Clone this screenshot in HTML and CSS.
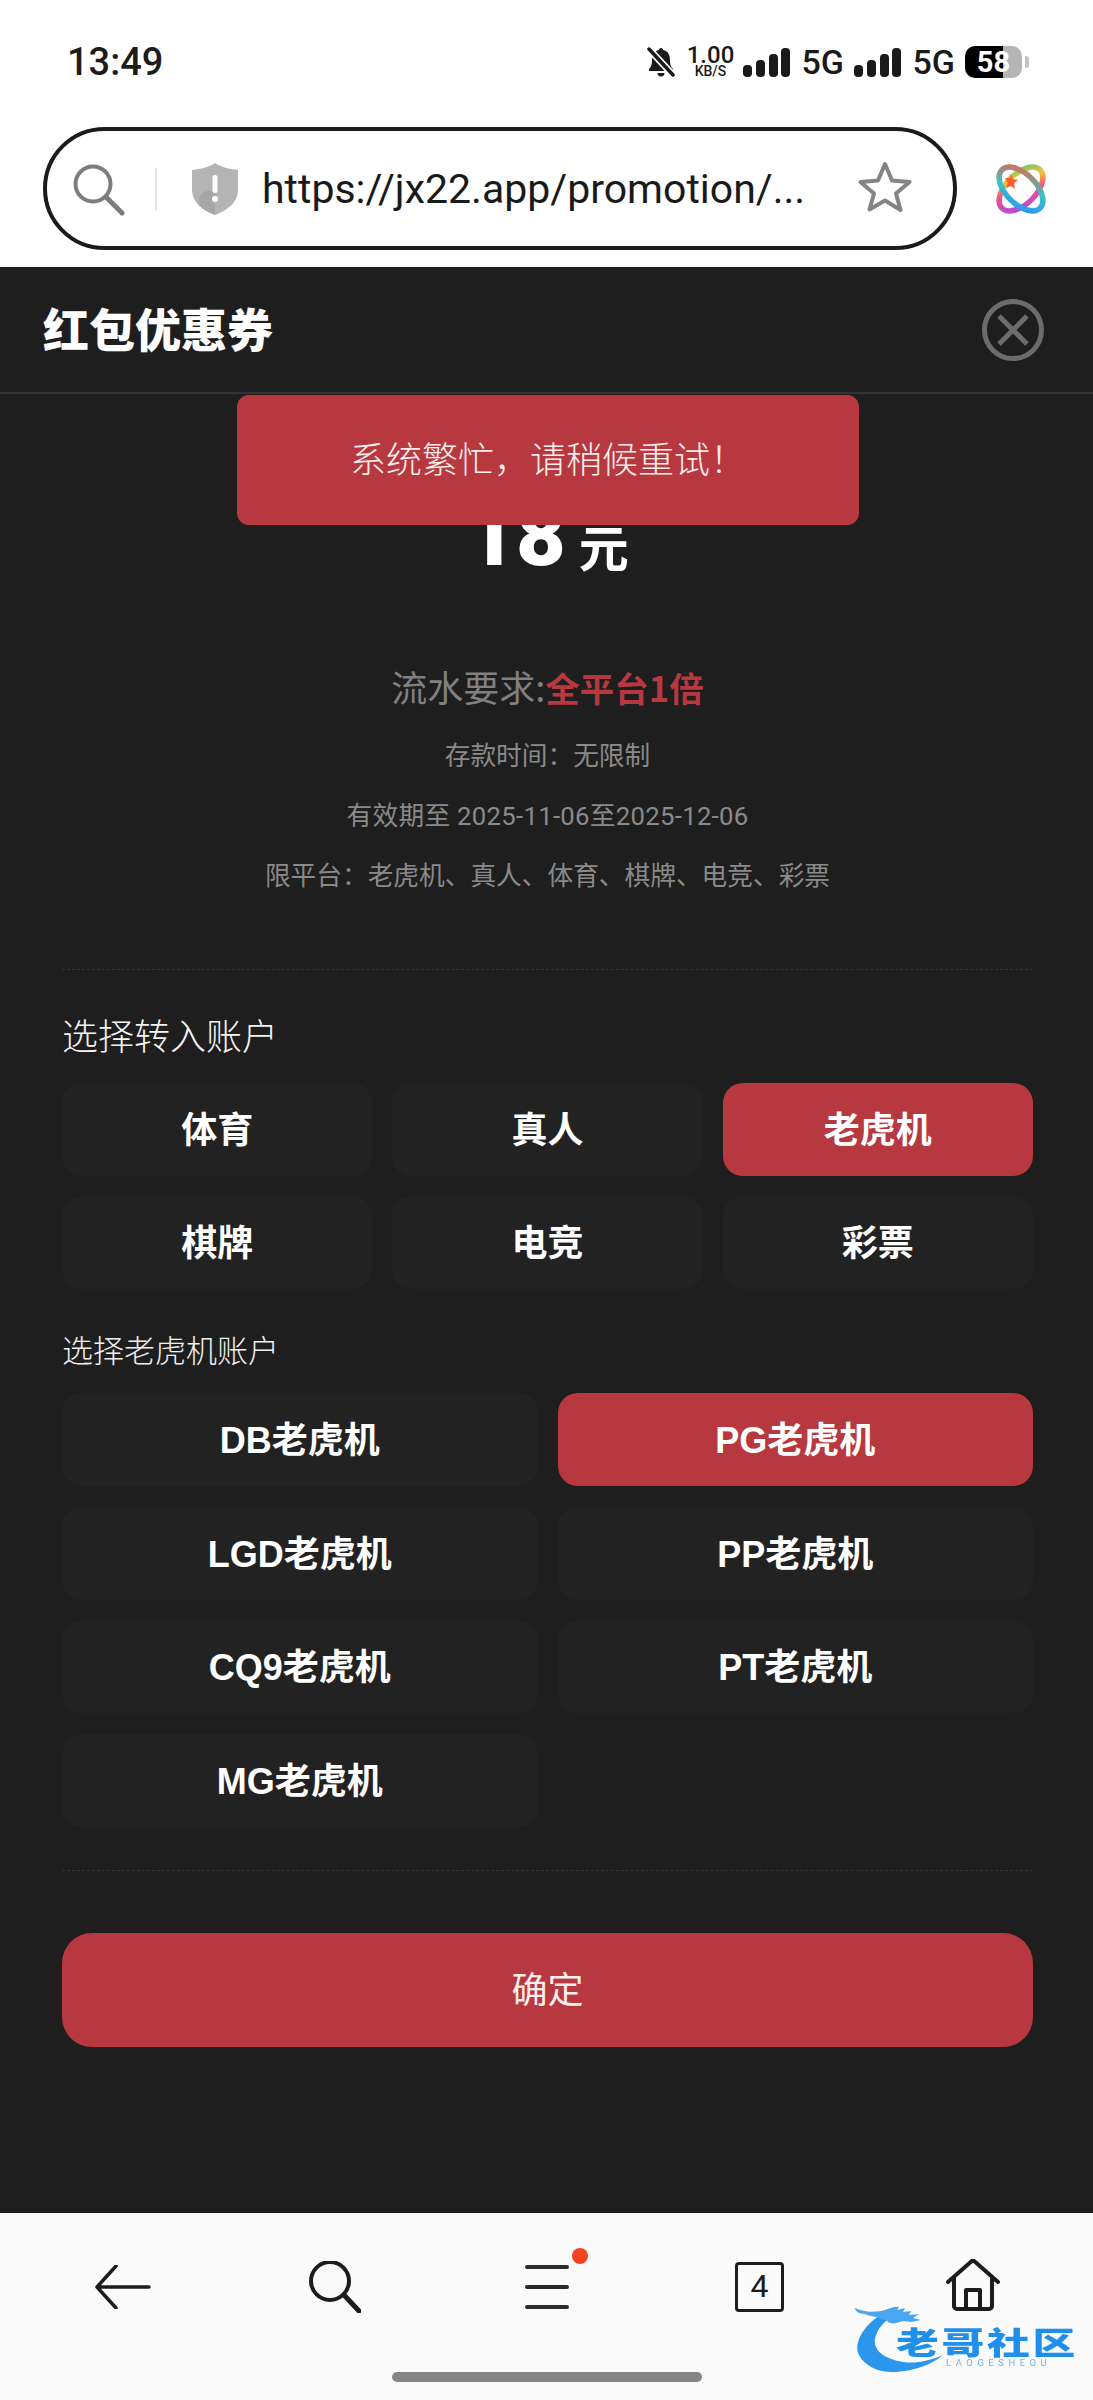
FILE: index.html
```html
<!DOCTYPE html>
<html lang="zh">
<head>
<meta charset="utf-8">
<title>红包优惠券</title>
<link rel="stylesheet" href="styles.css">
</head>
<body>
<div class="phone">
  <header class="status">
    <span class="time">13:49</span>
    <div class="status-right">
      <svg class="bell" viewBox="0 0 28 30"><path d="M14 1c1.500 0 2 1 2 2 5 1 7 5 7 10 0 5 1 7 3 9v2H2v-2c2-2 3-4 3-9 0-5 2-9 7-10 0-1 .5-2 2-2zM10.500 26h7a3.500 3.500 0 0 1-7 0z" fill="#1a1a1a"/><path d="M1 1l26 28" stroke="#fff" stroke-width="7"/><path d="M2 2l24 26" stroke="#1a1a1a" stroke-width="3.500" stroke-linecap="round"/></svg>
      <div class="speed"><span class="speed-num">1.00</span><span class="speed-unit">KB/S</span></div>
      <svg class="signal" viewBox="0 0 47 29"><rect x="0" y="17" width="9" height="12" rx="4"/><rect x="13" y="12" width="9" height="17" rx="4"/><rect x="26" y="6" width="9" height="23" rx="4"/><rect x="38" y="0" width="9" height="29" rx="4"/></svg>
      <span class="net">5G</span>
      <svg class="signal" viewBox="0 0 47 29"><rect x="0" y="17" width="9" height="12" rx="4"/><rect x="13" y="12" width="9" height="17" rx="4"/><rect x="26" y="6" width="9" height="23" rx="4"/><rect x="38" y="0" width="9" height="29" rx="4"/></svg>
      <span class="net">5G</span>
      <div class="battery"><span class="battery-level">58</span></div>
      <span class="battery-nub"></span>
    </div>
  </header>

  <div class="urlrow">
    <div class="urlbar">
      <svg class="icon-search" viewBox="0 0 52 52"><circle cx="20" cy="20" r="17.500" fill="none" stroke="#7d7d7d" stroke-width="4"/><path d="M33 33l16 16" stroke="#7d7d7d" stroke-width="5" stroke-linecap="round"/></svg>
      <span class="url-sep"></span>
      <svg class="icon-shield" viewBox="0 0 46 52"><path d="M23 0c6 4 14 6 23 7v20c0 12-10 20-23 25C10 47 0 39 0 27V7C9 6 17 4 23 0z" fill="#b4b4b4"/><path d="M23 52C10 47 3 41 8 33c5-7 12-6 15-2z" fill="#a6a6a6"/><rect x="20.500" y="12" width="5" height="18" rx="2.500" fill="#fff"/><circle cx="23" cy="36" r="3" fill="#fff"/></svg>
      <span class="url-text">https://jx22.app/promotion/...</span>
      <svg class="icon-star" viewBox="0 0 54 51"><path d="M27 3l7 16.500 17.500 1.500-13.500 11.500 4.500 16.500L27 39.500 11.500 48.500 16 32.500 2.500 21 20 19.500z" fill="none" stroke="#848484" stroke-width="4" stroke-linejoin="round"/></svg>
    </div>
    <svg class="icon-app" viewBox="0 0 50 50">
      <defs>
        <linearGradient id="rainbow" x1="0" y1="0" x2="1" y2="1">
          <stop offset="0" stop-color="#ff5a3c"/><stop offset=".5" stop-color="#35c6c4"/><stop offset="1" stop-color="#2f8df5"/>
        </linearGradient>
        <linearGradient id="rainbow2" x1="1" y1="0" x2="0" y2="1">
          <stop offset="0" stop-color="#45c98e"/><stop offset=".3" stop-color="#f4c52e"/><stop offset=".55" stop-color="#f0508a"/><stop offset="1" stop-color="#a64bf4"/>
        </linearGradient>
      </defs>
      <ellipse cx="25" cy="25" rx="27" ry="15" transform="rotate(-45 25 25)" fill="none" stroke="url(#rainbow2)" stroke-width="5.500"/>
      <ellipse cx="25" cy="25" rx="27" ry="15" transform="rotate(45 25 25)" fill="none" stroke="url(#rainbow)" stroke-width="5.500"/>
      <path d="M15 10l2 5 5 1-4 3 1 6-4-3-5 2 2-5-3-5 5 0z" fill="#ff5b2e"/>
    </svg>
  </div>

  <main class="sheet">
    <div class="sheet-head">
      <h1 class="sheet-title">红包优惠券</h1>
      <svg class="icon-close" viewBox="0 0 62 62"><circle cx="31" cy="31" r="28.500" fill="none" stroke="#6c6c6c" stroke-width="5"/><path d="M17 17l28 28M45 17L17 45" stroke="#6c6c6c" stroke-width="5"/></svg>
    </div>
    <div class="toast">系统繁忙，请稍候重试！</div>

    <section class="summary">
      <div class="amount"><span class="amount-num">18</span><span class="amount-unit">元</span></div>
      <p class="wager">流水要求:<strong class="wager-val">全平台1倍</strong></p>
      <p class="meta">存款时间：无限制</p>
      <p class="meta meta-date">有效期至 2025-11-06至2025-12-06</p>
      <p class="meta">限平台：老虎机、真人、体育、棋牌、电竞、彩票</p>
    </section>

    <div class="rule rule-top"></div>

    <h2 class="label-lg">选择转入账户</h2>
    <div class="grid grid-3">
      <button class="opt">体育</button>
      <button class="opt">真人</button>
      <button class="opt is-on">老虎机</button>
      <button class="opt">棋牌</button>
      <button class="opt">电竞</button>
      <button class="opt">彩票</button>
    </div>

    <h3 class="label-sm">选择老虎机账户</h3>
    <div class="grid grid-2">
      <button class="opt">DB老虎机</button>
      <button class="opt is-on">PG老虎机</button>
      <button class="opt">LGD老虎机</button>
      <button class="opt">PP老虎机</button>
      <button class="opt">CQ9老虎机</button>
      <button class="opt">PT老虎机</button>
      <button class="opt">MG老虎机</button>
    </div>

    <div class="rule rule-bottom"></div>

    <button class="confirm">确定</button>
  </main>

  <nav class="navbar">
    <div class="nav-icons">
      <svg class="nav-back" viewBox="0 0 56 44"><path d="M54 22H3M21 1L2 22l19 21" fill="none" stroke="#1c1c1c" stroke-width="3.500" stroke-linecap="round" stroke-linejoin="round"/></svg>
      <svg class="nav-search" viewBox="0 0 52 52"><circle cx="21" cy="20" r="19" fill="none" stroke="#1c1c1c" stroke-width="4"/><path d="M35 34l15 16" stroke="#1c1c1c" stroke-width="5" stroke-linecap="round"/></svg>
      <div class="nav-menu">
        <span class="menu-line"></span><span class="menu-line"></span><span class="menu-line"></span>
        <span class="menu-dot"></span>
      </div>
      <div class="nav-tabs">4</div>
      <svg class="nav-home" viewBox="0 0 54 52"><path d="M2 23L27 1l25 22M8 19v28a3 3 0 0 0 3 3h32a3 3 0 0 0 3-3V19M20 50V31h14v19" fill="none" stroke="#1c1c1c" stroke-width="4" stroke-linecap="round" stroke-linejoin="round"/></svg>
    </div>
    <div class="home-pill"></div>
    <div class="watermark">
      <svg class="wm-dragon" viewBox="0 0 140 70"><path d="M30 8C8 18-2 40 4 50c6 12 22 18 36 17 20-1 38-8 48-17-14 6-28 9-40 7C30 54 18 46 20 34c2-10 8-16 16-22z" fill="#2a97ec"/><path d="M0 3c10 5 22 4 30 2 6-2 10-4 14-3l-2 3 8-2-2 4 8-1-2 4 10-1-6 4 8 2-10 2c-6-1-10-1-14 1-4 1-8 0-10-2-8-4-18-5-22-7-6 0-10-3-10-6z" fill="#4aa6ef"/></svg>
      <span class="wm-text">老哥社区</span>
      <span class="wm-sub">LAOGESHEOU</span>
    </div>
  </nav>
</div>
</body>
</html>
```

FILE: styles.css
```css
* { box-sizing: border-box; }
html, body { margin: 0; padding: 0; background: #fff; }
body { font-family: "Roboto", "Noto Sans CJK SC", sans-serif; }
.phone { width: 1093px; height: 2400px; display: flex; flex-direction: column; overflow: hidden; position: relative; }

/* status bar */
.status { height: 127px; flex: none; display: flex; align-items: flex-start; justify-content: space-between; padding: 40px 64px 0 67px; background: #fff; }
.time { font-family: "Roboto", sans-serif; font-size: 38px; line-height: 44px; font-weight: 500; color: #1c1c1c; }
.status-right { display: flex; align-items: center; height: 44px; color: #1a1a1a; }
.bell { width: 28px; height: 30px; margin-right: 12px; }
.speed { display: flex; flex-direction: column; align-items: center; width: 47px; margin-right: 9px; font-family: "Roboto", sans-serif; font-weight: 500; }
.speed-num { font-size: 24px; line-height: 19px; }
.speed-unit { font-size: 14px; line-height: 13px; }
.signal { width: 47px; height: 29px; fill: #1a1a1a; margin-right: 11.500px; }
.net { font-family: "Roboto", sans-serif; font-size: 34px; font-weight: 500; width: 41px; margin-right: 11.500px; line-height: 44px; white-space: nowrap; }
.battery { width: 57px; height: 32px; border-radius: 10px; background: linear-gradient(90deg, #000 0 38px, #b5b5b5 38px); display: flex; align-items: center; justify-content: center; }
.battery-level { color: #fff; font-family: "Roboto", sans-serif; font-weight: 700; font-size: 29px; line-height: 32px; }
.battery-nub { width: 4px; height: 12px; margin-left: 3px; border-radius: 0 3px 3px 0; background: #c4c4c4; }

/* url row */
.urlrow { height: 140px; flex: none; display: flex; align-items: flex-start; padding-left: 43px; background: #fff; }
.urlbar { width: 914px; height: 123px; border: 4.500px solid #1b1b1b; border-radius: 62px; display: flex; align-items: center; padding-left: 26px; background: #fff; }
.icon-search { width: 52px; height: 52px; flex: none; margin-top: 2px; }
.url-sep { width: 2px; height: 42px; margin-left: 30px; background: #e2e2e2; flex: none; }
.icon-shield { width: 46px; height: 52px; flex: none; margin-left: 35px; }
.url-text { font-family: "Roboto", sans-serif; font-size: 41px; line-height: 50px; color: #1a1a1a; margin-left: 24px; white-space: nowrap; width: 542px; flex: none; }
.icon-star { width: 54px; height: 51px; flex: none; margin-left: 54px; margin-top: -4px; }
.icon-app { width: 50px; height: 50px; margin-left: 39px; margin-top: 37px; flex: none; overflow: visible; }

/* sheet */
.sheet { flex: 1; background: #1e1e1e; position: relative; color: #fff; display: flex; flex-direction: column; padding: 0 60px 0 62px; }
.sheet-head { margin: 0 -60px 0 -62px; height: 127px; padding: 0 49px 0 43px; display: flex; align-items: center; justify-content: space-between; border-bottom: 2px solid #333; }
.sheet-title { margin: 0 0 5px; font-size: 46px; line-height: 60px; font-weight: 900; color: #fff; font-family: "Noto Sans CJK SC", sans-serif; }
.icon-close { width: 62px; height: 62px; flex: none; }

.toast { position: absolute; left: 237px; top: 128px; width: 622px; height: 130px; border-radius: 12px; background: #b7393f; color: #fdeeee; font-family: "Noto Sans CJK SC", sans-serif; font-weight: 300; font-size: 36px; line-height: 124px; text-align: center; }

.summary { display: flex; flex-direction: column; align-items: center; padding-top: 95px; }
.amount { height: 90px; display: flex; align-items: flex-end; justify-content: center; line-height: 1; }
.amount-num { font-family: "Roboto", sans-serif; font-size: 86px; font-weight: 900; line-height: 90px; color: #fff; margin-bottom: -2px; }
.amount-unit { font-family: "Noto Sans CJK SC", sans-serif; font-size: 50px; font-weight: 700; line-height: 60px; margin-left: 13px; margin-bottom: 4px; }
.wager { margin: 82px 0 2px; font-family: "Noto Sans CJK SC", sans-serif; font-size: 36px; line-height: 50px; color: #808080; font-weight: 400; }
.wager-val { color: #b7393f; font-weight: 700; font-size: 34.500px; }
.meta { margin: 0; font-family: "Roboto", "Noto Sans CJK SC", sans-serif; font-size: 25.700px; line-height: 36px; color: #8a8a8a; font-weight: 400; padding-top: 24px; }
.meta-date { letter-spacing: .3px; }

.rule { height: 0; flex: none; border-top: 1px dashed #333; }
.rule-top { margin-top: 75px; }
.rule-bottom { margin-top: 43px; }

.label-lg { margin: 39px 0 0; font-family: "Noto Sans CJK SC", sans-serif; font-size: 36px; line-height: 50px; font-weight: 300; color: #f5f5f5; }
.label-sm { margin: 37px 0 0; font-family: "Noto Sans CJK SC", sans-serif; font-size: 31px; line-height: 46px; font-weight: 300; color: #f0f0f0; }

.grid { display: grid; gap: 20px; grid-auto-rows: 93px; }
.grid-3 { grid-template-columns: repeat(3, 1fr); margin-top: 24px; }
.grid-2 { grid-template-columns: repeat(2, 1fr); margin-top: 21px; row-gap: 20.670px; }
.opt { border: 0; border-radius: 20px; background: #222; color: #fff; font-family: "Liberation Sans", "Noto Sans CJK SC", sans-serif; font-size: 36px; font-weight: 700; padding: 0 0 5px; }
.opt.is-on { background: #b7393f; }

.confirm { margin-top: 62px; height: 114px; flex: none; border: 0; border-radius: 30px; background: #b7393f; color: #fdeeee; font-family: "Noto Sans CJK SC", sans-serif; font-weight: 400; font-size: 36px; padding: 0 0 5px; }

/* bottom nav */
.navbar { height: 187px; flex: none; background: #fafafa; position: relative; display: flex; flex-direction: column; align-items: center; }
.nav-icons { position: relative; width: 100%; height: 159px; }
.nav-back { position: absolute; left: 95px; top: 52px; width: 56px; height: 44px; }
.nav-search { position: absolute; left: 309px; top: 48px; width: 52px; height: 52px; }
.nav-menu { position: absolute; left: 525px; top: 52px; width: 44px; height: 44px; display: flex; flex-direction: column; justify-content: space-between; }
.menu-line { display: block; height: 4px; background: #2a2a2a; border-radius: 2px; }
.menu-dot { position: absolute; left: 47px; top: -17px; width: 16px; height: 16px; border-radius: 50%; background: #f4431f; }
.nav-tabs { position: absolute; left: 735px; top: 49px; width: 49px; height: 50px; border: 3.500px solid #1c1c1c; border-radius: 4px; font-family: "Roboto", sans-serif; font-size: 32px; line-height: 43px; text-align: center; color: #1c1c1c; }
.nav-home { position: absolute; left: 946px; top: 46px; width: 54px; height: 52px; }
.home-pill { width: 310px; height: 10px; border-radius: 5px; background: #858585; }
.watermark { position: absolute; left: 855px; top: 92px; width: 222px; height: 70px; }
.wm-dragon { position: absolute; left: 0; top: 0; width: 140px; height: 70px; filter: blur(.6px); }
.wm-text { position: absolute; left: 41px; top: 14px; font-family: "Noto Sans CJK SC", sans-serif; font-weight: 900; font-size: 31px; line-height: 44px; letter-spacing: 2px; color: #1f8fec; white-space: nowrap; transform: scaleX(1.38); transform-origin: left center; filter: blur(.4px); }
.wm-sub { position: absolute; left: 91px; top: 52px; font-family: "Roboto", sans-serif; font-size: 9.500px; line-height: 12px; letter-spacing: 4.500px; color: #6db4ef; white-space: nowrap; filter: blur(.3px); }
```
